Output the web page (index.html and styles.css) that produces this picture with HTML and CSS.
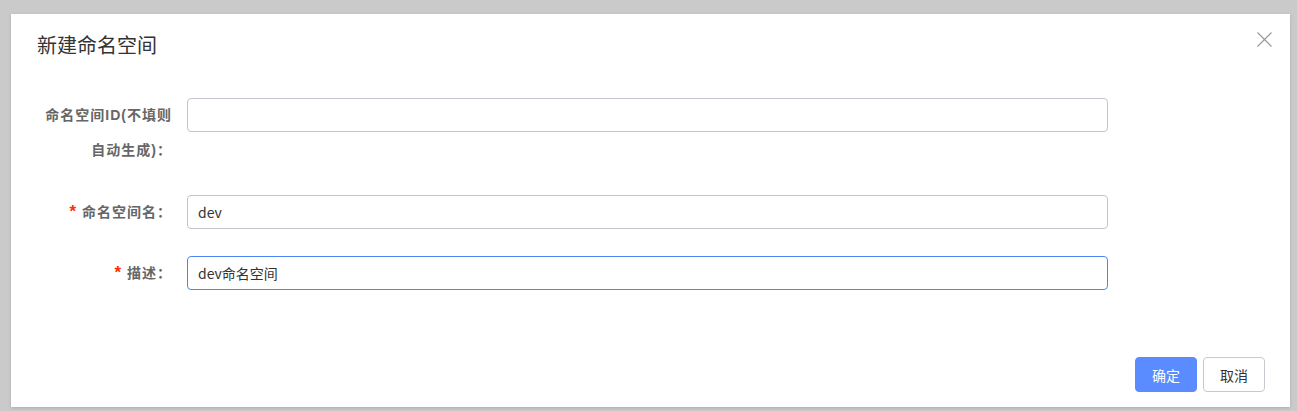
FILE: index.html
```html
<!DOCTYPE html>
<html lang="zh-CN">
<head>
<meta charset="utf-8">
<title>新建命名空间</title>
<link rel="stylesheet" href="styles.css">
</head>
<body>
<div class="dialog">
  <div class="dialog-header">
    <span class="dialog-title">新建命名空间</span>
    <button class="dialog-close" aria-label="关闭">
      <svg width="15" height="15" viewBox="0 0 15 15"><path d="M0.5 0.5 L14.5 14.5 M14.5 0.5 L0.5 14.5" stroke="#9a9a9a" stroke-width="1.2" fill="none"/></svg>
    </button>
  </div>
  <form class="dialog-form">
    <div class="form-row">
      <label class="form-label form-label-multi">命名空间ID(不填则自动生成)：</label>
      <div class="form-control"><input class="input" type="text" value=""></div>
    </div>
    <div class="form-row">
      <label class="form-label"><span class="req">*</span>命名空间名：</label>
      <div class="form-control"><input class="input" type="text" value="dev"></div>
    </div>
    <div class="form-row">
      <label class="form-label"><span class="req">*</span>描述：</label>
      <div class="form-control"><input class="input input-focus" type="text" value="dev命名空间"></div>
    </div>
  </form>
  <div class="dialog-footer">
    <button class="btn btn-primary" type="button">确定</button>
    <button class="btn" type="button">取消</button>
  </div>
</div>
</body>
</html>
```
FILE: styles.css
```css
* { box-sizing: border-box; }
html, body { margin: 0; padding: 0; }
body {
  background: #cacaca;
  font-family: "Liberation Sans", "Noto Sans CJK SC", sans-serif;
  width: 1297px;
  height: 411px;
  overflow: hidden;
  padding: 14px 0 0 11px;
}
.dialog {
  position: relative;
  width: 1279px;
  height: 393px;
  background: #fff;
  display: flex;
  flex-direction: column;
  box-shadow: 0 1px 3px rgba(0,0,0,0.15);
}
.dialog-header {
  height: 60px;
  padding: 0 26px;
  display: flex;
  align-items: center;
}
.dialog-title {
  font-size: 20px;
  color: #333;
  font-family: "Noto Sans CJK SC", sans-serif;
}
.dialog-close {
  position: absolute;
  top: 18px;
  right: 18px;
  width: 15px;
  height: 15px;
  padding: 0;
  border: 0;
  background: none;
  display: block;
}
.dialog-close svg { display: block; }
.dialog-form {
  margin-top: 24px;
  padding-left: 27px;
  display: flex;
  flex-direction: column;
  gap: 27px;
}
.form-row {
  display: flex;
  align-items: flex-start;
}
.form-label {
  width: 149px;
  padding-right: 15px;
  text-align: right;
  font-size: 14px;
  letter-spacing: 1px;
  line-height: 34px;
  font-weight: bold;
  color: #666;
  font-family: "Liberation Sans", "Noto Sans CJK SC", sans-serif;
}
.form-label-multi {
  line-height: 35px;
}
.req {
  color: #ff2d00;
  font-size: 17px;
  margin-right: 6px;
  letter-spacing: 0;
}
.form-control {
  width: 921px;
}
.input {
  display: block;
  width: 100%;
  height: 34px;
  border: 1px solid #c4c4cc;
  border-radius: 4px;
  padding: 0 10px;
  font-size: 14px;
  color: #333;
  font-family: "Noto Sans CJK SC", sans-serif;
  outline: none;
  background: #fff;
}
.input-focus {
  border-color: #4f86f7;
}
.dialog-footer {
  margin-top: auto;
  padding: 0 25px 15px 0;
  display: flex;
  justify-content: flex-end;
  gap: 6px;
}
.btn {
  width: 62px;
  height: 35px;
  border: 1px solid #c8c8d0;
  border-radius: 4px;
  background: #fff;
  color: #333;
  font-size: 14px;
  font-family: "Noto Sans CJK SC", sans-serif;
  padding: 0;
}
.btn-primary {
  background: #5a8cff;
  border-color: #5a8cff;
  color: #fff;
}
```
